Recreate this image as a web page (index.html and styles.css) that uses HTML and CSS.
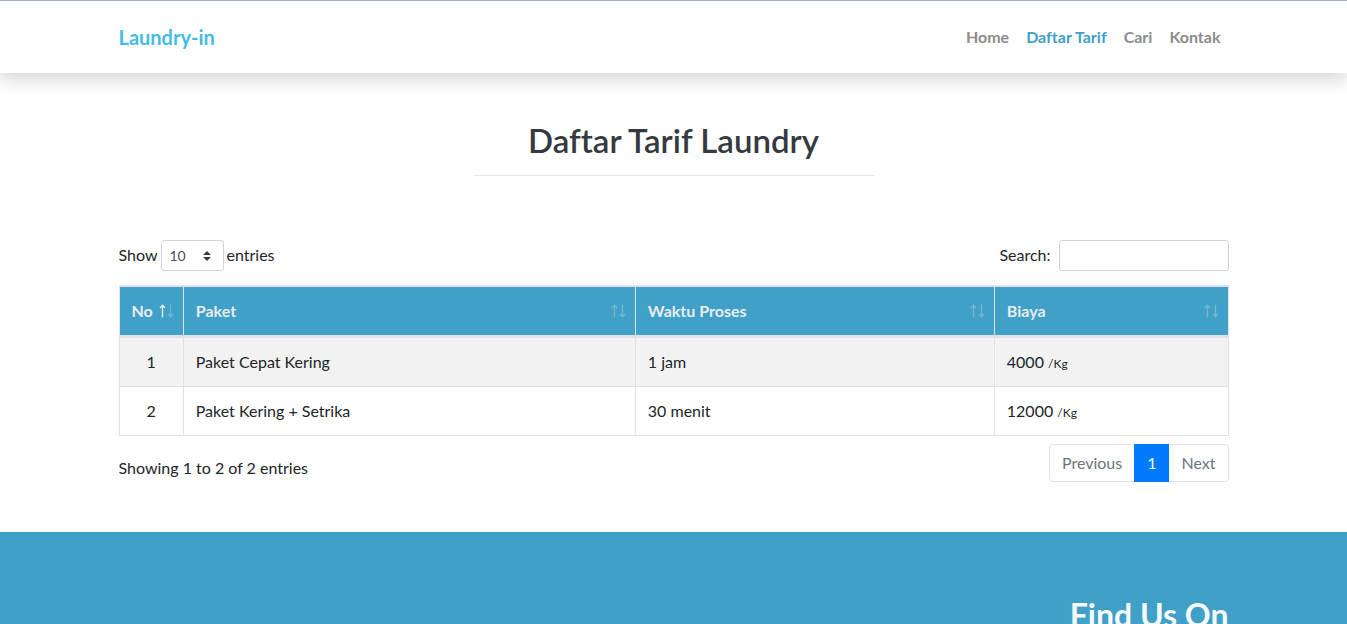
FILE: index.html
```html
<!DOCTYPE html>
<html lang="id">
<head>
<meta charset="utf-8">
<meta name="viewport" content="width=device-width, initial-scale=1">
<title>Laundry-in</title>
<link rel="stylesheet" href="styles.css">
</head>
<body>
<svg class="sprite" aria-hidden="true">
  <symbol id="arrow-up" viewBox="0 0 7 14"><path d="M3.5 13.5V1.2M1 4l2.5-2.8L6 4" fill="none" stroke="currentColor" stroke-width="1.3"/></symbol>
  <symbol id="arrow-down" viewBox="0 0 7 14"><path d="M3.5 .5v12.300M1 10l2.500 2.800L6 10" fill="none" stroke="currentColor" stroke-width="1.3"/></symbol>
</svg>
<header class="navbar">
  <div class="container navbar-inner">
    <a class="brand" href="#">Laundry-in</a>
    <nav class="nav">
      <a class="nav-link" href="#">Home</a>
      <a class="nav-link active" href="#">Daftar Tarif</a>
      <a class="nav-link" href="#">Cari</a>
      <a class="nav-link" href="#">Kontak</a>
    </nav>
  </div>
</header>
<main class="container main">
  <h2 class="title">Daftar Tarif Laundry</h2>
  <hr class="rule">
  <div class="toolbar">
    <label class="length">Show
      <span class="select-wrap">
        <select class="control select"><option>10</option><option>25</option><option>50</option><option>100</option></select>
        <svg class="caret" viewBox="0 0 8 10" aria-hidden="true"><path d="M4 0l4 4H0zM0 6h8l-4 4z" fill="#343a40"/></svg>
      </span>
      entries</label>
    <label class="search">Search:<input class="control search-input" type="search"></label>
  </div>
  <table class="table">
    <thead>
      <tr>
        <th class="col-no"><div class="head">No<span class="sort asc"><svg><use href="#arrow-up"/></svg><svg><use href="#arrow-down"/></svg></span></div></th>
        <th class="col-paket"><div class="head">Paket<span class="sort"><svg><use href="#arrow-up"/></svg><svg><use href="#arrow-down"/></svg></span></div></th>
        <th class="col-waktu"><div class="head">Waktu Proses<span class="sort"><svg><use href="#arrow-up"/></svg><svg><use href="#arrow-down"/></svg></span></div></th>
        <th><div class="head">Biaya<span class="sort"><svg><use href="#arrow-up"/></svg><svg><use href="#arrow-down"/></svg></span></div></th>
      </tr>
    </thead>
    <tbody>
      <tr><td class="center">1</td><td>Paket Cepat Kering</td><td>1 jam</td><td>4000 <span class="unit">/Kg</span></td></tr>
      <tr><td class="center">2</td><td>Paket Kering + Setrika</td><td>30 menit</td><td>12000 <span class="unit">/Kg</span></td></tr>
    </tbody>
  </table>
  <div class="table-footer">
    <div class="info">Showing 1 to 2 of 2 entries</div>
    <div class="pagination">
      <button class="page" type="button">Previous</button>
      <button class="page current" type="button">1</button>
      <button class="page" type="button">Next</button>
    </div>
  </div>
</main>
<footer class="footer">
  <div class="container"><h2 class="footer-title">Find Us On</h2></div>
</footer>
</body>
</html>
```
FILE: styles.css
```css
*, *::before, *::after { box-sizing: border-box; }
body {
  margin: 0;
  height: 100vh;
  overflow: hidden;
  font-family: Lato, sans-serif;
  font-size: 16px;
  line-height: 24px;
  font-variant-ligatures: none;
  color: #212529;
  background: #fff;
}
.sprite { position: absolute; width: 0; height: 0; }
.container { width: 100%; max-width: 1140px; margin: 0 auto; padding: 0 15px; }

.navbar {
  border-top: 1px solid #a3acc8;
  background: #fff;
  box-shadow: 0 8px 16px rgba(0, 0, 0, .15);
}
.navbar-inner { display: flex; align-items: center; justify-content: space-between; height: 72px; }
.brand { font-size: 20px; line-height: 30px; font-weight: 700; color: #45bbe6; text-decoration: none; }
.nav { display: flex; gap: 1px; }
.nav-link { padding: 8px; font-weight: 700; color: #8c8c8c; text-decoration: none; }
.nav-link.active { color: #3fa0c6; }

.main { padding-top: 48px; padding-bottom: 50px; }
.title { margin: 0 0 16px; font-size: 33px; line-height: 38px; font-weight: 600; text-align: center; color: #343a40; }
.rule { width: 100%; max-width: 400px; margin: 0 auto; border: 0; border-top: 1px solid #e5e5e5; }

.toolbar { display: flex; justify-content: space-between; margin-top: 64px; margin-bottom: 14px; }
.length, .search { display: flex; line-height: 30px; }
.length { gap: 3px; }
.search { gap: 8px; }
.control {
  height: 31px;
  border: 1px solid #ced4da;
  border-radius: 3px;
  background: #fff;
  color: #495057;
  font: 14px/21px Lato, sans-serif;
}
.select-wrap { position: relative; display: flex; }
.select { width: 63px; padding: 4px 8px; appearance: none; }
.caret { position: absolute; right: 13px; top: 11px; width: 8px; height: 10px; pointer-events: none; }
.search-input { width: 170px; padding: 4px 8px; }

.table { width: 100%; border: 1px solid #dee2e6; border-collapse: separate; border-spacing: 0; table-layout: fixed; }
.table th, .table td { padding: 12px; border-top: 1px solid #dee2e6; border-right: 1px solid #dee2e6; text-align: left; }
.table th:last-child, .table td:last-child { border-right: 0; }
.table th { padding-right: 9px; border-bottom: 2px solid #dee2e6; background: #40a0c7; background-clip: padding-box; color: #e9ecef; font-weight: 700; }
.table .center { text-align: center; }
.table tbody tr:nth-child(odd) { background: #f2f2f2; }
.col-no { width: 5.8%; }
.col-paket { width: 40.8%; }
.col-waktu { width: 32.4%; }
.head { display: flex; align-items: center; justify-content: space-between; }
.sort { display: flex; gap: 1px; }
.sort svg { width: 7px; height: 14px; opacity: .3; }
.sort.asc svg:first-child { opacity: 1; }
.unit { font-size: 12px; line-height: 12px; }

.table-footer { display: flex; justify-content: space-between; margin-top: 8px; }
.info { padding-top: 12px; }
.pagination { display: flex; }
.page {
  height: 38px;
  padding: 0 12px;
  border: 1px solid #dee2e6;
  background: #fff;
  color: #6c757d;
  font: 16px/20px Lato, sans-serif;
}
.page + .page { margin-left: -1px; }
.page:first-child { border-radius: 4px 0 0 4px; }
.page:last-child { border-radius: 0 4px 4px 0; }
.page.current { position: relative; border-color: #007bff; background: #007bff; color: #fff; }

.footer { padding: 64px 0; background: #40a0c7; color: #f8f9fa; }
.footer-title { margin: 0; font-size: 32px; line-height: 38px; font-weight: 700; text-align: right; }
```
